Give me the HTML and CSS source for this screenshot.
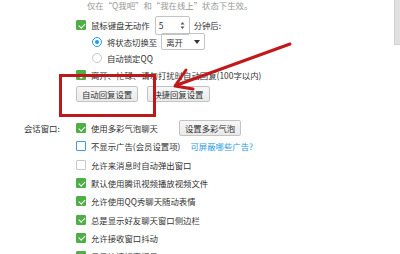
FILE: index.html
```html
<!DOCTYPE html>
<html lang="zh-CN">
<head>
  <meta charset="UTF-8" />
  <title>会话设置</title>
  <link rel="stylesheet" href="styles.css">
</head>
<body>

<div class="panel">
  <div class="group first">
    <div class="label"></div>
    <div class="opts">
      <div class="note">仅在“Q我吧”和“我在线上”状态下生效。</div>
      <div class="row r1">
        <span class="cb on"></span>鼠标键盘无动作
        <span class="spin">
          <span>5</span>
          <svg width="5" height="9" viewBox="0 0 5 9">
            <path d="M0.5 3.5 L2.5 1 L4.5 3.5 Z M0.5 5.5 L2.5 8 L4.5 5.5 Z" fill="#555"/>
          </svg>
        </span>
        分钟后:
      </div>
      <div class="row sub r2">
        <span class="radio on"></span>将状态切换至
        <span class="select">
          <span>离开</span>
          <svg width="6" height="4" viewBox="0 0 6 4"><path d="M0 0 H6 L3 4 Z" fill="#333"/></svg>
        </span>
      </div>
      <div class="row sub">
        <span class="radio"></span>自动锁定QQ
      </div>
      <div class="row">
        <span class="cb on"></span>离开、忙碌、请勿打扰时自动回复(100字以内)
      </div>
      <div class="btns">
        <button class="btn">自动回复设置</button>
        <button class="btn">快捷回复设置</button>
      </div>
    </div>
  </div>

  <div class="group second">
    <div class="label">会话窗口:</div>
    <div class="opts">
      <div class="row">
        <span class="cb on"></span>使用多彩气泡聊天
        <button class="btn bubble">设置多彩气泡</button>
      </div>
      <div class="row">
        <span class="cb focus"></span>不显示广告(会员设置项)
        <a class="link" href="#">可屏蔽哪些广告?</a>
      </div>
      <div class="row"><span class="cb"></span>允许来消息时自动弹出窗口</div>
      <div class="row"><span class="cb on"></span>默认使用腾讯视频播放视频文件</div>
      <div class="row"><span class="cb on"></span>允许使用QQ秀聊天随动表情</div>
      <div class="row"><span class="cb on"></span>总是显示好友聊天窗口侧边栏</div>
      <div class="row"><span class="cb on"></span>允许接收窗口抖动</div>
      <div class="row"><span class="cb on"></span>显示快捷搜索提示</div>
    </div>
  </div>
</div>

<div class="scrollbar"></div>

<!-- annotation overlay -->
<div class="mark"></div>
<svg class="arrow" width="400" height="254" viewBox="0 0 400 254">
  <line x1="290" y1="44" x2="177" y2="85" stroke="#c0181b" stroke-width="3" stroke-linecap="round"/>
  <polyline points="186,70 175,86 193,89" fill="none" stroke="#c0181b" stroke-width="3" stroke-linecap="round" stroke-linejoin="round"/>
</svg>

</body>
</html>
```

FILE: styles.css
```css
body {
  margin: 0;
  background: #fff;
  font-family: "Noto Sans CJK SC", "Noto Sans", sans-serif;
  font-size: 8.4px;
  color: #333;
  overflow: hidden;
}

.panel {
  width: 394px;
  height: 254px;
  overflow: hidden;
}

.group {
  display: flex;
}

.label {
  width: 52px;
  padding-left: 24px;
  flex-shrink: 0;
  line-height: 18.3px;
}

.opts {
  flex: 1;
}

.note {
  color: #999;
  padding-left: 11px;
  height: 10px;
  line-height: 10px;
}

.row {
  display: flex;
  align-items: center;
  height: 17.5px;
  white-space: nowrap;
}

.row.sub {
  padding-left: 16px;
}

.r1 {
  margin-top: 6px;
  height: 18px;
}

.r2 {
  height: 15px;
}

.second {
  margin-top: 17px;
}

.second .row {
  height: 18.3px;
}

/* checkboxes */
.cb {
  width: 8px;
  height: 8px;
  border: 1px solid #c8c8c8;
  border-radius: 1px;
  background: #fff;
  margin-right: 5px;
  position: relative;
  flex-shrink: 0;
}

.cb.on {
  background: #4fae45;
  border-color: #4fae45;
}

.cb.on::after {
  content: "";
  position: absolute;
  left: 2.5px;
  top: 0.5px;
  width: 2.5px;
  height: 5px;
  border: solid #fff;
  border-width: 0 1.5px 1.5px 0;
  transform: rotate(45deg);
}

.cb.focus {
  border-color: #3d9be6;
}

/* radios */
.radio {
  width: 8px;
  height: 8px;
  border: 1px solid #c8c8c8;
  border-radius: 50%;
  margin-right: 5px;
  position: relative;
  flex-shrink: 0;
}

.radio.on {
  border-color: #1d9be8;
}

.radio.on::after {
  content: "";
  position: absolute;
  left: 2px;
  top: 2px;
  width: 4px;
  height: 4px;
  border-radius: 50%;
  background: #1d9be8;
}

/* spin + select */
.spin {
  display: flex;
  justify-content: space-between;
  align-items: center;
  width: 26px;
  height: 17px;
  border: 1px solid #c4c4c4;
  border-radius: 2px;
  padding: 0 4px 0 3px;
  margin: 0 4px 0 5px;
}

.select {
  display: flex;
  justify-content: space-between;
  align-items: center;
  width: 34px;
  height: 15px;
  border: 1px solid #c4c4c4;
  border-radius: 2px;
  padding: 0 4px;
  margin-left: 4px;
}

/* buttons */
.btns {
  display: flex;
  gap: 9px;
  margin-top: 2px;
}

.btn {
  font-family: inherit;
  font-size: 8.4px;
  color: #333;
  height: 16px;
  padding: 0 5px;
  border: 1px solid #c3c3c3;
  border-radius: 2px;
  background: linear-gradient(#f7f7f7, #e9e9e9);
  line-height: 14px;
}

.btn.bubble {
  margin-left: 21px;
}

.link {
  color: #2a9de0;
  text-decoration: none;
  margin-left: 10px;
}

.scrollbar {
  position: absolute;
  left: 394px;
  top: 0;
  width: 5px;
  height: 44px;
  background: #e0e0e0;
  border: 1px solid #d2d2d2;
  border-top: none;
}

/* red annotation */
.mark {
  position: absolute;
  left: 59px;
  top: 74px;
  width: 91px;
  height: 37px;
  border: 3px solid #bd181b;
}

.arrow {
  position: absolute;
  left: 0;
  top: 0;
}
```
